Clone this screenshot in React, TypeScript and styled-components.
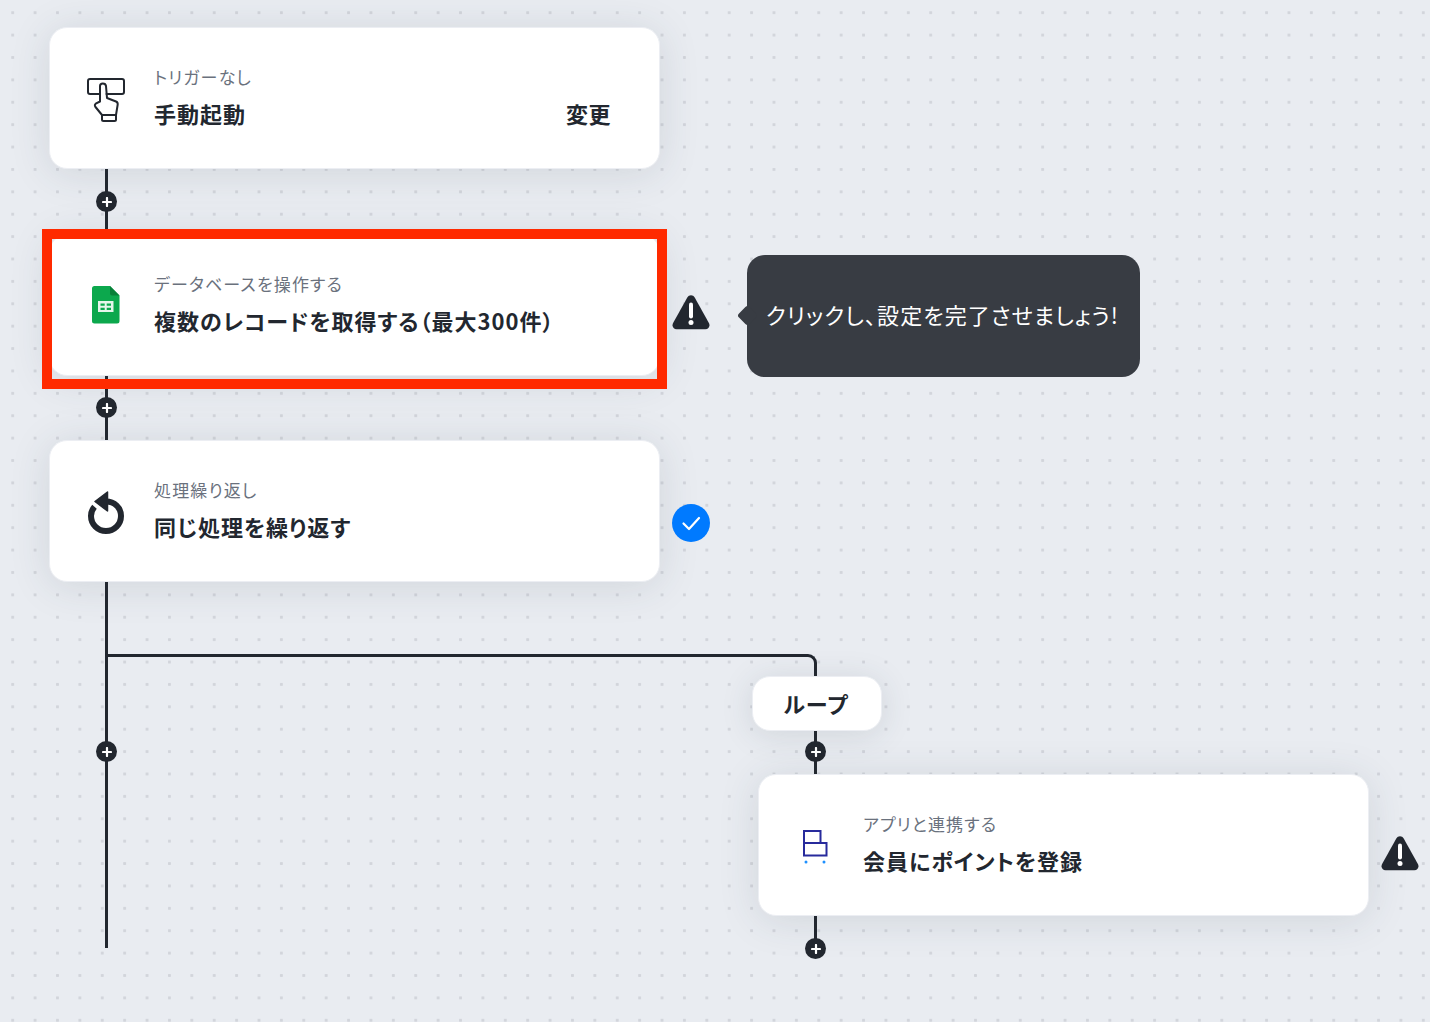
import React from "react";
import styled, { createGlobalStyle } from "styled-components";

const Global = createGlobalStyle`
  html, body { margin: 0; padding: 0; background: #e9ecf1; }
  body { font-family: "Noto Sans CJK JP", "Noto Sans", sans-serif; overflow: hidden; }
`;

const Canvas = styled.div`
  position: relative;
  width: 1430px;
  height: 1022px;
  overflow: hidden;
  background-color: #e9ecf1;
  background-image: radial-gradient(circle, #d2d5db 1.3px, transparent 1.9px);
  background-size: 22.4px 22.4px;
  background-position: 1.5px 1.5px;
`;

const Line = styled.div<{ $x: number; $y: number; $h: number }>`
  position: absolute;
  left: ${(p) => p.$x}px;
  top: ${(p) => p.$y}px;
  width: 3px;
  height: ${(p) => p.$h}px;
  background: #22272f;
`;

const Branch = styled.div`
  position: absolute;
  left: 107px;
  top: 654px;
  width: 707px;
  height: 30px;
  border-top: 3px solid #22272f;
  border-right: 3px solid #22272f;
  border-top-right-radius: 9px;
`;

const Card = styled.div<{ $x: number; $y: number }>`
  position: absolute;
  left: ${(p) => p.$x}px;
  top: ${(p) => p.$y}px;
  box-sizing: border-box;
  width: 611px;
  height: 142px;
  display: flex;
  align-items: center;
  padding: 0 48px 0 36px;
  background: #fff;
  border: 1px solid #eceef3;
  border-radius: 18px;
  box-shadow: 0 4px 40px rgba(50, 60, 80, 0.13);
`;

const IconSlot = styled.div<{ $drop?: number }>`
  width: 40px;
  margin-right: 28px;
  padding-top: ${(p) => p.$drop ?? 0}px;
  flex: none;
  display: flex;
  align-items: center;
  justify-content: center;
`;

const CardText = styled.div`
  flex: 1;
  display: flex;
  flex-direction: column;
  gap: 8px;
  margin-top: -5px;
`;

const Label = styled.div`
  font-size: 17px;
  line-height: 26px;
  color: #6a717d;
  font-weight: 400;
  font-feature-settings: "palt";
  letter-spacing: 1.15px;
`;

const Title = styled.div`
  font-size: 22px;
  line-height: 30px;
  color: #22272f;
  font-weight: 600;
  font-feature-settings: "palt";
  letter-spacing: 1px;
`;

const Change = styled.div`
  font-size: 22px;
  line-height: 30px;
  color: #22272f;
  font-weight: 600;
  letter-spacing: 0.5px;
  margin-top: 30px;
`;

const PlusDot = styled.div<{ $x: number; $y: number }>`
  position: absolute;
  left: ${(p) => p.$x - 10.5}px;
  top: ${(p) => p.$y - 10}px;
  width: 21px;
  height: 21px;
  border-radius: 50%;
  background: #22272f;
  display: flex;
  align-items: center;
  justify-content: center;
`;

const Highlight = styled.div`
  position: absolute;
  left: 42px;
  top: 229px;
  box-sizing: border-box;
  width: 625px;
  height: 160px;
  border: 10px solid #ff2a00;
`;

const Status = styled.div<{ $x: number; $y: number }>`
  position: absolute;
  left: ${(p) => p.$x}px;
  top: ${(p) => p.$y}px;
  line-height: 0;
`;

const Tooltip = styled.div`
  position: absolute;
  left: 747px;
  top: 255px;
  box-sizing: border-box;
  width: 393px;
  height: 122px;
  padding: 0 0 4px 19px;
  display: flex;
  align-items: center;
  background: #383c43;
  border-radius: 18px;
  color: #fff;
  font-size: 22px;
  white-space: nowrap;
  font-feature-settings: "palt";
  letter-spacing: 1.1px;
  &::before {
    content: "";
    position: absolute;
    left: -7px;
    top: 53px;
    width: 15px;
    height: 15px;
    background: #383c43;
    border-radius: 3px;
    transform: rotate(45deg);
  }
`;

const Pill = styled.div`
  position: absolute;
  left: 752px;
  top: 676px;
  box-sizing: border-box;
  width: 130px;
  height: 55px;
  padding: 0 2px 2px 0;
  display: flex;
  align-items: center;
  justify-content: center;
  background: #fff;
  border: 1px solid #eceef3;
  border-radius: 18px;
  box-shadow: 0 4px 32px rgba(50, 60, 80, 0.13);
  font-size: 22px;
  font-weight: 600;
  color: #22272f;
  font-feature-settings: "palt";
  letter-spacing: 1px;
`;

const Plus = () => (
  <svg width="10" height="10" viewBox="0 0 10 10" fill="none">
    <path d="M5 1v8M1 5h8" stroke="#fff" strokeWidth="2.200" strokeLinecap="round" />
  </svg>
);

const Warning = () => (
  <svg width="38" height="35" viewBox="0 0 38 35">
    <path
      d="M19 .3c1.500 0 2.800.8 3.700 2.200l14.200 25.500c1.500 2.900-.2 6.200-3.500 6.200H4.600c-3.300 0-5-3.300-3.500-6.200L15.300 2.500C16.200 1.100 17.500.3 19 .3z"
      fill="#22272f"
    />
    <path d="M19 9.500v12" stroke="#fff" strokeWidth="4" strokeLinecap="round" />
    <circle cx="19" cy="27.500" r="2.500" fill="#fff" />
  </svg>
);

const Check = () => (
  <svg width="38" height="38" viewBox="0 0 38 38">
    <circle cx="19" cy="19" r="19" fill="#007aff" />
    <path d="M11.500 19.500l5.500 5.500 10-11" fill="none" stroke="#fff" strokeWidth="2.200" strokeLinecap="round" strokeLinejoin="round" />
  </svg>
);

const HandIcon = () => (
  <svg width="38" height="44" viewBox="0 0 38 44" fill="none" stroke="#22272f" strokeWidth="2" strokeLinejoin="round" strokeLinecap="round">
    <path d="M13 16H3a2 2 0 0 1-2-2V3a2 2 0 0 1 2-2h32a2 2 0 0 1 2 2v11a2 2 0 0 1-2 2H19.500" />
    <path d="M15 37l-6.500-8c-1-1.200-.8-2.500.2-3.300L13 23.500V8c0-3.500 5.500-3.500 6 0l1 12 9 3.500c1.300.5 1.800 1.500 1.700 3L29 37z" />
    <path d="M15 37h14v4.500c0 .8-.6 1.500-1.500 1.500h-11c-.8 0-1.500-.7-1.500-1.500z" />
  </svg>
);

const SheetsIcon = () => (
  <svg width="28" height="38" viewBox="0 0 28 38">
    <path d="M2.500 0H18l9.500 9.500V35a2.500 2.500 0 0 1-2.500 2.500H2.500A2.500 2.500 0 0 1 0 35V2.500A2.500 2.500 0 0 1 2.500 0z" fill="#0ca84d" />
    <path d="M18 0l9.500 9.500H20a2 2 0 0 1-2-2z" fill="#078038" />
    <path d="M6 15h15.500v11H6z" fill="#e6f5eb" />
    <path d="M8.500 17.500h4.200v2.200H8.500zM14.700 17.500h4.300v2.200h-4.300zM8.500 21.700h4.200v2.200H8.500zM14.700 21.700h4.300v2.200h-4.300z" fill="#0ca84d" />
  </svg>
);

const LoopIcon = () => (
  <svg width="38" height="44" viewBox="0 0 38 44" fill="none">
    <path d="M19 10.500c8.500 0 15 6.200 15 14.500a15 15 0 1 1-30 0c0-3.600 1.200-6.700 3.500-9.300" stroke="#22272f" strokeWidth="6" />
    <path d="M20.500 1v19L8 10.500z" fill="#22272f" stroke="#22272f" strokeWidth="1.500" strokeLinejoin="round" />
  </svg>
);

const CartIcon = () => (
  <svg width="26" height="36" viewBox="0 0 26 36" fill="none">
    <path d="M2 2h16.500v12H24.500v12.500H2zM2 14h16.500" stroke="#272a9c" strokeWidth="2" />
    <circle cx="4" cy="33" r="1.500" fill="#1e90ff" />
    <circle cx="22" cy="33" r="1.500" fill="#1e90ff" />
  </svg>
);

export default function App() {
  return (
    <Canvas>
      <Global />
      <Line $x={105} $y={160} $h={788} />
      <Branch />
      <Line $x={814} $y={725} $h={60} />
      <Line $x={814} $y={905} $h={43} />

      <Card $x={49} $y={27}>
        <IconSlot $drop={4}><HandIcon /></IconSlot>
        <CardText>
          <Label>トリガーなし</Label>
          <Title>手動起動</Title>
        </CardText>
        <Change>変更</Change>
      </Card>

      <Card $x={49} $y={234}>
        <IconSlot><SheetsIcon /></IconSlot>
        <CardText>
          <Label>データベースを操作する</Label>
          <Title>複数のレコードを取得する（最大300件）</Title>
        </CardText>
      </Card>

      <Card $x={49} $y={440}>
        <IconSlot $drop={4}><LoopIcon /></IconSlot>
        <CardText>
          <Label>処理繰り返し</Label>
          <Title>同じ処理を繰り返す</Title>
        </CardText>
      </Card>

      <Card $x={758} $y={774}>
        <IconSlot $drop={3}><CartIcon /></IconSlot>
        <CardText>
          <Label>アプリと連携する</Label>
          <Title>会員にポイントを登録</Title>
        </CardText>
      </Card>

      <Highlight />

      <PlusDot $x={106.500} $y={201}><Plus /></PlusDot>
      <PlusDot $x={106.500} $y={407}><Plus /></PlusDot>
      <PlusDot $x={106.500} $y={751}><Plus /></PlusDot>
      <PlusDot $x={815.500} $y={751}><Plus /></PlusDot>
      <PlusDot $x={815.500} $y={948}><Plus /></PlusDot>

      <Status $x={672} $y={295}><Warning /></Status>
      <Status $x={672} $y={504}><Check /></Status>
      <Status $x={1380.500} $y={836}><Warning /></Status>

      <Tooltip>クリックし、設定を完了させましょう!</Tooltip>
      <Pill>ループ</Pill>
    </Canvas>
  );
}
